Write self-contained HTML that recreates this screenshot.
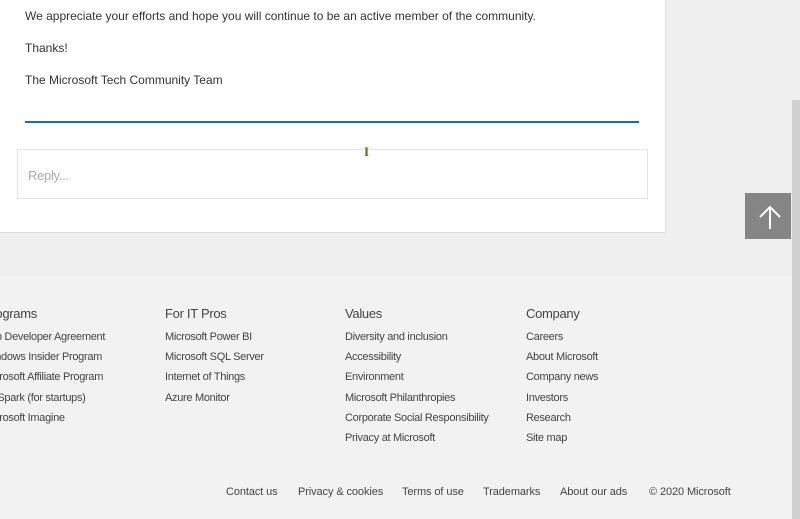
<!DOCTYPE html>
<html><head><meta charset="utf-8"><style>
html,body{margin:0;padding:0}
body{width:800px;height:519px;overflow:hidden;position:relative;background:#efefef;font-family:"Liberation Sans",sans-serif;color:#333}
.card{position:absolute;left:0;top:0;width:665px;height:232px;background:#fff;border-right:1px solid #ddd;border-bottom:1px solid #ddd}
.t{position:absolute;left:25px;font-size:12px;letter-spacing:0px;color:#333;white-space:nowrap}
.line{position:absolute;left:25px;top:121px;width:614px;height:2px;background:#1f6bb0}
.reply{position:absolute;left:17px;top:149px;width:629px;height:48px;border:1px solid #e3e3e3;background:#fff}
.reply span{position:absolute;left:10px;top:18px;font-size:13px;color:#aaa;letter-spacing:-0.3px}
.cursor{position:absolute;left:364px;top:144px;z-index:5;font-size:13px;font-weight:bold;color:#5a6a10;font-family:"Liberation Serif",serif}
.top{position:absolute;left:745px;top:193px;width:46px;height:46px;background:#858585}
.scroll{position:absolute;left:792px;top:100px;width:8px;height:419px;background:#d0d0d0}
.footer{position:absolute;left:0;top:276px;width:792px;height:243px;background:#f2f2f2}
.col{position:absolute;top:30px;white-space:nowrap}
.col h4{margin:0 0 8px 0;font-size:13px;font-weight:normal;color:#444;letter-spacing:-0.3px;height:16px}
.col div{font-size:11px;color:#444;height:20.2px;line-height:14px;letter-spacing:-0.3px}
.bot{position:absolute;top:210px;font-size:11px;color:#444;white-space:nowrap;letter-spacing:-0.1px}
</style></head><body>
<div class="card">
<div class="t" style="top:9px">We appreciate your efforts and hope you will continue to be an active member of the community.</div>
<div class="t" style="top:41px">Thanks!</div>
<div class="t" style="top:73px">The Microsoft Tech Community Team</div>
<div class="line"></div>
<div class="reply"><span>Reply...</span></div>
<div class="cursor">I</div>
</div>
<div class="scroll"></div>
<div class="top"><svg width="46" height="46" viewBox="0 0 46 46"><path d="M25 36V14M15 24L25 14L35 24" stroke="#fff" stroke-width="2" fill="none"/></svg></div>
<div class="footer">
<div class="col" style="left:-17px"><h4>Programs</h4><div>App Developer Agreement</div><div>Windows Insider Program</div><div>Microsoft Affiliate Program</div><div>BizSpark (for startups)</div><div>Microsoft Imagine</div></div>
<div class="col" style="left:165px"><h4>For IT Pros</h4><div>Microsoft Power BI</div><div>Microsoft SQL Server</div><div>Internet of Things</div><div>Azure Monitor</div></div>
<div class="col" style="left:345px"><h4>Values</h4><div>Diversity and inclusion</div><div>Accessibility</div><div>Environment</div><div>Microsoft Philanthropies</div><div>Corporate Social Responsibility</div><div>Privacy at Microsoft</div></div>
<div class="col" style="left:526px"><h4>Company</h4><div>Careers</div><div>About Microsoft</div><div>Company news</div><div>Investors</div><div>Research</div><div>Site map</div></div>
<div class="bot" style="left:226px">Contact us</div>
<div class="bot" style="left:298px">Privacy &amp; cookies</div>
<div class="bot" style="left:402px">Terms of use</div>
<div class="bot" style="left:483px">Trademarks</div>
<div class="bot" style="left:560px">About our ads</div>
<div class="bot" style="left:649px">© 2020 Microsoft</div>
</div>
</body></html>
